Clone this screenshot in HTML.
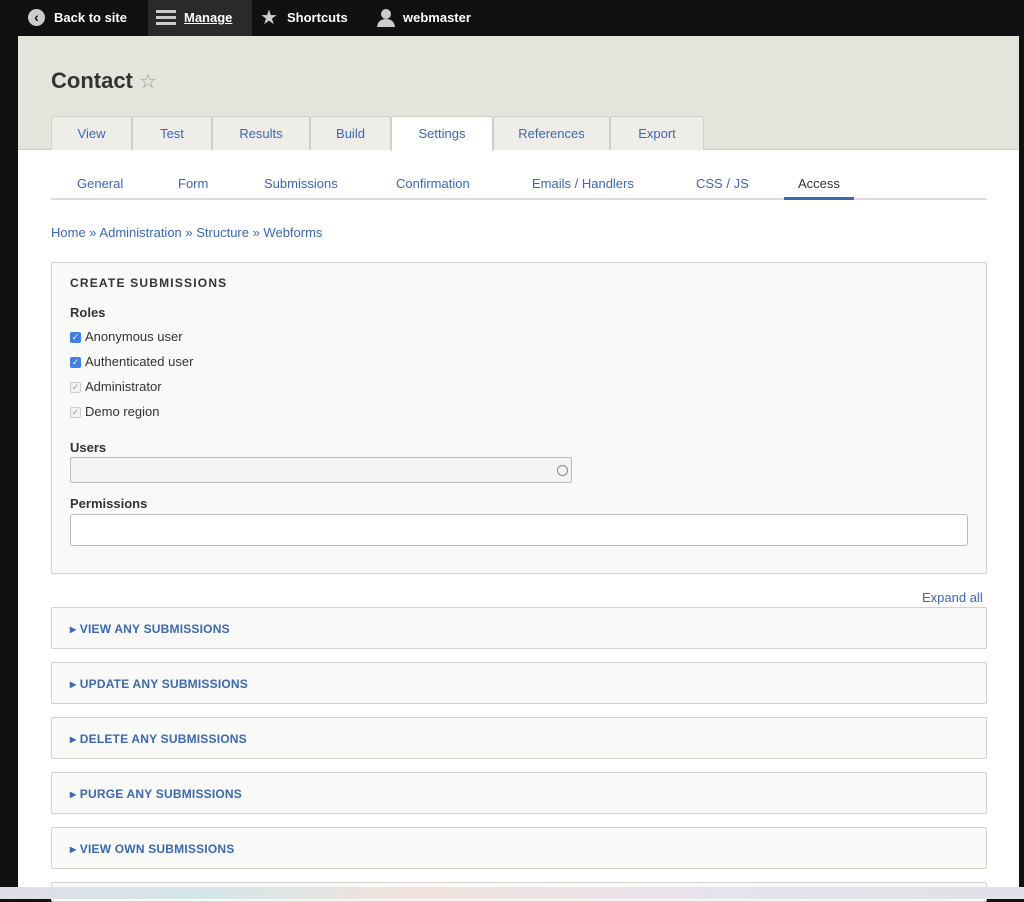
<!DOCTYPE html>
<html><head><style>
*{box-sizing:border-box;margin:0;padding:0}
body{width:1024px;height:899px;overflow:hidden;background:#111;font-family:"Liberation Sans",sans-serif;position:relative}
.a{position:absolute}
#main{left:18px;top:36px;width:1001px;height:851px;background:#fff}
#hdr{left:18px;top:36px;width:1001px;height:114px;background:#e4e3dc;border-bottom:1px solid #ccc}
.tb{color:#fff;font-weight:bold;font-size:13px;top:10px}
.tab{top:116px;height:34px;background:#eeede8;border:1px solid #cfcfc8;border-bottom:none;border-radius:3px 3px 0 0;color:#3b68b3;font-size:13px;text-align:center;line-height:34px}
.st{top:176px;font-size:13px;color:#3b68b3}
.lnk{color:#3b68b3;font-size:13px}
.box{left:51px;width:936px;background:#f9f9f7;border:1px solid #d3d3ce;border-radius:2px}
.col{height:42px;font-size:12px;font-weight:bold;color:#3b68b3;letter-spacing:.2px;padding:14px 0 0 18px}
.cb{width:11px;height:11px;border-radius:2px;left:70px;font-size:9px;line-height:11px;text-align:center}
.on{background:#3f7fe8;color:#fff}
.off{border:1px solid #ccc;background:#f3f3f3;color:#999;line-height:9px}
.lbl{left:85px;font-size:13px;color:#333}
</style></head><body>
<div class="a" style="left:148px;top:0;width:104px;height:36px;background:#2a2a2a"></div>
<div class="a" style="left:28px;top:9px;width:17px;height:17px;border-radius:50%;background:#ccc;color:#111;font-size:14px;font-weight:bold;text-align:center;line-height:16px">&lsaquo;</div>
<div class="a tb" style="left:54px">Back to site</div>
<div class="a" style="left:156px;top:10px;width:20px;height:3px;background:#ccc;box-shadow:0 6px 0 #ccc,0 12px 0 #ccc"></div>
<div class="a tb" style="left:184px;text-decoration:underline">Manage</div>
<div class="a" style="left:260px;top:5px;color:#ccc;font-size:20px">★</div>
<div class="a tb" style="left:287px">Shortcuts</div>
<svg class="a" style="left:376px;top:8px" width="20" height="20"><circle cx="10" cy="6" r="5" fill="#ccc"/><path d="M1 19 Q2 11 10 11 Q18 11 19 19Z" fill="#ccc"/></svg>
<div class="a tb" style="left:403px">webmaster</div>
<div id="main" class="a"></div>
<div id="hdr" class="a"></div>
<div class="a" style="left:51px;top:68px;font-size:22px;font-weight:bold;color:#333">Contact <span style="color:#999;font-weight:normal;font-size:20px">☆</span></div>
<div class="a tab" style="left:51px;width:81px">View</div>
<div class="a tab" style="left:132px;width:80px">Test</div>
<div class="a tab" style="left:212px;width:98px">Results</div>
<div class="a tab" style="left:310px;width:81px">Build</div>
<div class="a tab" style="left:391px;width:102px;background:#fff;height:35px">Settings</div>
<div class="a tab" style="left:493px;width:117px">References</div>
<div class="a tab" style="left:610px;width:94px">Export</div>
<div class="a st" style="left:77px">General</div>
<div class="a st" style="left:178px">Form</div>
<div class="a st" style="left:264px">Submissions</div>
<div class="a st" style="left:396px">Confirmation</div>
<div class="a st" style="left:532px">Emails / Handlers</div>
<div class="a st" style="left:696px">CSS / JS</div>
<div class="a st" style="left:798px;color:#333">Access</div>
<div class="a" style="left:51px;top:198px;width:936px;height:2px;background:#ddd"></div>
<div class="a" style="left:784px;top:197px;width:70px;height:3px;background:#3b68b3"></div>
<div class="a lnk" style="left:51px;top:225px">Home » Administration » Structure » Webforms</div>
<div class="a box" style="top:262px;height:312px"></div>
<div class="a" style="left:70px;top:276px;font-size:12px;font-weight:bold;letter-spacing:1.2px;color:#333">CREATE SUBMISSIONS</div>
<div class="a" style="left:70px;top:305px;font-size:13px;font-weight:bold;color:#333">Roles</div>
<div class="a cb on" style="top:332px">✓</div><div class="a lbl" style="top:329px">Anonymous user</div>
<div class="a cb on" style="top:357px">✓</div><div class="a lbl" style="top:354px">Authenticated user</div>
<div class="a cb off" style="top:382px">✓</div><div class="a lbl" style="top:379px">Administrator</div>
<div class="a cb off" style="top:407px">✓</div><div class="a lbl" style="top:404px">Demo region</div>
<div class="a" style="left:70px;top:440px;font-size:13px;font-weight:bold;color:#333">Users</div>
<div class="a" style="left:70px;top:457px;width:502px;height:26px;border:1px solid #bbb;border-radius:2px;background:#f3f3f1"></div>
<div class="a" style="left:557px;top:465px;width:11px;height:11px;border:1px solid #888;border-radius:50%"></div>
<div class="a" style="left:70px;top:496px;font-size:13px;font-weight:bold;color:#333">Permissions</div>
<div class="a" style="left:70px;top:514px;width:898px;height:32px;border:1px solid #bbb;border-radius:3px;background:#fff"></div>
<div class="a lnk" style="left:922px;top:590px">Expand all</div>
<div class="a box col" style="top:607px">▸ VIEW ANY SUBMISSIONS</div>
<div class="a box col" style="top:662px">▸ UPDATE ANY SUBMISSIONS</div>
<div class="a box col" style="top:717px">▸ DELETE ANY SUBMISSIONS</div>
<div class="a box col" style="top:772px">▸ PURGE ANY SUBMISSIONS</div>
<div class="a box col" style="top:827px">▸ VIEW OWN SUBMISSIONS</div>
<div class="a box" style="top:882px;height:20px"></div>
<div class="a" style="left:0;top:887px;width:1024px;height:12px;background:linear-gradient(90deg,#e0dde6,#d5e6ea 20%,#f0e2dc 40%,#e6e2ee 70%,#e2e0e8)"></div>
</body></html>
